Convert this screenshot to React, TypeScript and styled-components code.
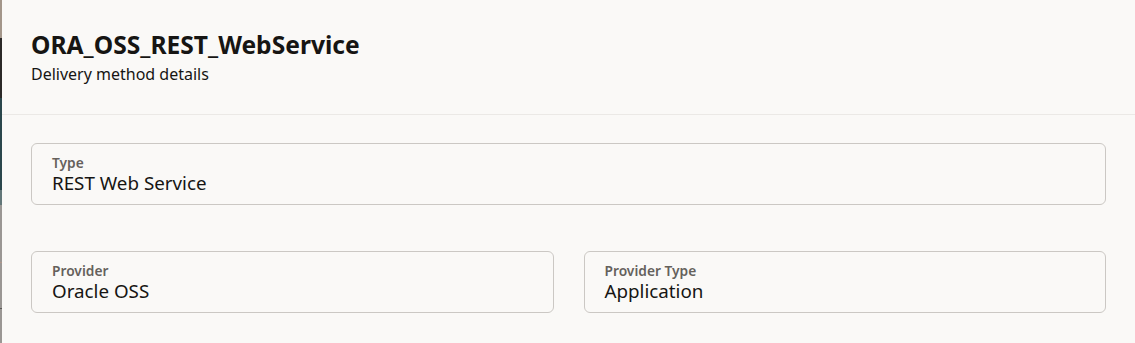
import React from "react";
import styled, { createGlobalStyle } from "styled-components";

const Global = createGlobalStyle`
  html, body { margin: 0; padding: 0; background: #faf9f7; }
  body { font-family: "Noto Sans", "Open Sans", sans-serif; color: #161513; }
  * { box-sizing: border-box; }
`;

const Page = styled.div`
  display: flex;
  width: 1135px;
  height: 343px;
  overflow: hidden;
`;

const Backdrop = styled.div`
  width: 2px;
  display: flex;
  flex-direction: column;
  flex: none;
`;

const Seg = styled.div<{ $h: number; $c: string }>`
  height: ${(p) => p.$h}px;
  background: ${(p) => p.$c};
  flex: none;
`;

const Panel = styled.div`
  flex: 1;
  background: #faf9f7;
  display: flex;
  flex-direction: column;
`;

const Header = styled.header`
  padding: 29px 29px 0;
  height: 115px;
  border-bottom: 1px solid #ebe9e6;
`;

const Title = styled.h1`
  margin: 0;
  font-size: 24.6px;
  line-height: 32px;
  font-weight: 700;
`;

const Subtitle = styled.div`
  margin-top: 2px;
  font-size: 16px;
  line-height: 22px;
`;

const Body = styled.div`
  padding: 28px 29px 0 29px;
  display: flex;
  flex-direction: column;
  gap: 46px;
`;

const Row = styled.div<{ $cols: number }>`
  display: grid;
  grid-template-columns: repeat(${(p) => p.$cols}, 1fr);
  gap: 30px;
`;

const Field = styled.div`
  height: 62px;
  border: 1px solid #cbc8c4;
  border-radius: 6px;
  padding: 10px 20px 0;
  display: flex;
  flex-direction: column;
`;

const Label = styled.div`
  font-size: 13.75px;
  line-height: 17px;
  font-weight: 600;
  color: #65615c;
`;

const Value = styled.div`
  font-size: 18.8px;
  line-height: 24px;
  color: #161513;
`;

const ReadField = ({ label, value }: { label: string; value: string }) => (
  <Field>
    <Label>{label}</Label>
    <Value>{value}</Value>
  </Field>
);

export default function App() {
  return (
    <>
      <Global />
      <Page>
        <Backdrop>
          <Seg $h={38} $c="#a3968a" />
          <Seg $h={60} $c="#2b2928" />
          <Seg $h={92} $c="#2a474c" />
          <Seg $h={15} $c="#627779" />
          <Seg $h={57} $c="#9a9794" />
          <Seg $h={1} $c="#b0968a" />
          <Seg $h={45} $c="#9a9794" />
          <Seg $h={1} $c="#5a5856" />
          <Seg $h={34} $c="#9a9794" />
        </Backdrop>
        <Panel>
          <Header>
            <Title>ORA_OSS_REST_WebService</Title>
            <Subtitle>Delivery method details</Subtitle>
          </Header>
          <Body>
            <Row $cols={1}>
              <ReadField label="Type" value="REST Web Service" />
            </Row>
            <Row $cols={2}>
              <ReadField label="Provider" value="Oracle OSS" />
              <ReadField label="Provider Type" value="Application" />
            </Row>
          </Body>
        </Panel>
      </Page>
    </>
  );
}
